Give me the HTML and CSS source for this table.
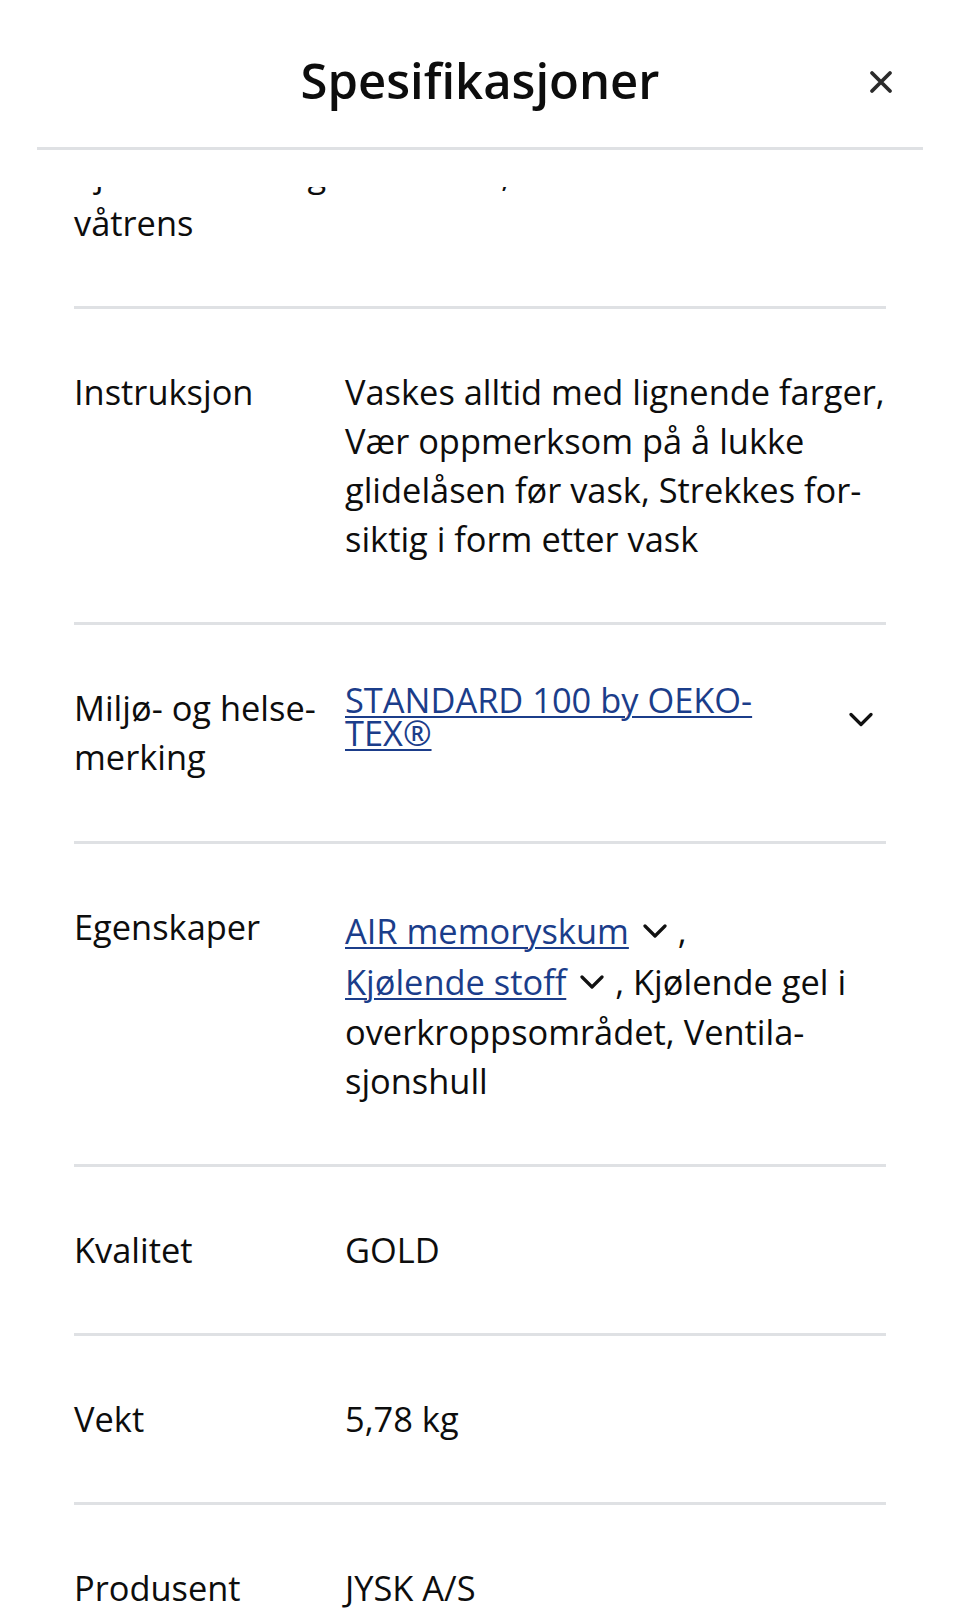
FILE: index.html
```html
<!DOCTYPE html>
<html lang="no">
<head>
<meta charset="utf-8">
<title>Spesifikasjoner</title>
<link rel="stylesheet" href="styles.css">
</head>
<body>
<div class="sheet">
  <header class="sheet-head">
    <h1 class="sheet-title">Spesifikasjoner</h1>
    <button class="close" type="button" aria-label="Lukk">
      <svg width="24" height="24" viewBox="0 0 24 24" aria-hidden="true"><path d="M3 3L21 21M21 3L3 21" fill="none" stroke="#2b2b2b" stroke-width="3.8" stroke-linecap="round"/></svg>
    </button>
  </header>
  <div class="sheet-body">
    <dl class="specs">
      <div class="spec-row">
        <dt>Kjemisk rens og våtrens</dt>
        <dd>Ikke tillatt, må ikke renses</dd>
      </div>
      <div class="spec-row">
        <dt>Instruksjon</dt>
        <dd>Vaskes alltid med lignende farger, Vær oppmerksom på å lukke glidelåsen før vask, Strekkes for&shy;siktig i form etter vask</dd>
      </div>
      <div class="spec-row">
        <dt>Miljø- og helse&shy;merking</dt>
        <dd class="dd-link">
          <a class="link link-block" href="#">STANDARD 100 by OEKO-TEX®</a>
          <button class="expand" type="button" aria-label="Vis mer">
            <svg width="24" height="15" viewBox="0 0 24 15" aria-hidden="true"><path d="M2 2.5L12 12.5L22 2.5" fill="none" stroke="#111" stroke-width="3.2" stroke-linecap="round" stroke-linejoin="round"/></svg>
          </button>
        </dd>
      </div>
      <div class="spec-row">
        <dt>Egenskaper</dt>
        <dd class="dd-tags"><span class="tag"><a class="link" href="#">AIR memoryskum</a><svg class="chev" width="24" height="14" viewBox="0 0 24 14" aria-hidden="true"><path d="M2 2L12 12L22 2" fill="none" stroke="#111" stroke-width="3.2" stroke-linecap="round" stroke-linejoin="round"/></svg> ,</span> <span class="tag"><a class="link" href="#">Kjølende stoff</a><svg class="chev" width="24" height="14" viewBox="0 0 24 14" aria-hidden="true"><path d="M2 2L12 12L22 2" fill="none" stroke="#111" stroke-width="3.2" stroke-linecap="round" stroke-linejoin="round"/></svg> ,</span> Kjølende gel i overkroppsområdet, Ventila&shy;sjonshull</dd>
      </div>
      <div class="spec-row">
        <dt>Kvalitet</dt>
        <dd>GOLD</dd>
      </div>
      <div class="spec-row">
        <dt>Vekt</dt>
        <dd>5,78 kg</dd>
      </div>
      <div class="spec-row">
        <dt>Produsent</dt>
        <dd>JYSK A/S</dd>
      </div>
    </dl>
  </div>
</div>
</body>
</html>
```

FILE: styles.css
```css
html, body {
  margin: 0;
  padding: 0;
  height: 1615px;
  overflow: hidden;
  background: #ffffff;
}

body {
  font-family: "Open Sans", "Noto Sans", "Liberation Sans", sans-serif;
  color: #0d0d0d;
}

.sheet {
  height: 1615px;
  display: flex;
  flex-direction: column;
}

.sheet-head {
  margin: 0 37px;
  padding: 50px 0 37px;
  border-bottom: 3px solid #dfe1e4;
  display: grid;
  grid-template-columns: 1fr auto 1fr;
  align-items: center;
}

.sheet-title {
  grid-column: 2;
  margin: 0;
  font-size: 49px;
  font-weight: 600;
  line-height: 60px;
  color: #0d0d0d;
}

.close {
  grid-column: 3;
  justify-self: end;
  margin-right: 18px;
  margin-top: 4px;
  width: 48px;
  height: 48px;
  padding: 0;
  border: 0;
  background: transparent;
  display: flex;
  align-items: center;
  justify-content: center;
}

.sheet-body {
  flex: 1;
  overflow: hidden;
  margin-top: 37px;
  padding: 0 74px;
}

.specs {
  margin: -96px 0 0;
  padding: 0;
}

.spec-row {
  display: grid;
  grid-template-columns: 255px 1fr;
  column-gap: 16px;
  align-items: start;
  padding: 58px 0 59px;
  border-bottom: 3px solid #dfe1e4;
}

.spec-row dt,
.spec-row dd {
  margin: 0;
  font-size: 34.4px;
  line-height: 49px;
}

.dd-link {
  display: flex;
  align-items: flex-start;
  gap: 16px;
  min-height: 99px;
}

.link {
  color: #1b3d8a;
  text-decoration: underline;
  text-decoration-thickness: 2px;
  text-underline-offset: 3px;
}

.link-block {
  flex: 1;
  line-height: 33px;
}

.expand {
  flex: none;
  width: 50px;
  height: 50px;
  margin-top: 11px;
  padding: 0;
  border: 0;
  background: transparent;
  display: flex;
  align-items: center;
  justify-content: center;
}

.dd-tags {
  padding-top: 3px;
}

.tag {
  display: inline-block;
  white-space: nowrap;
  line-height: 51px;
}

.chev {
  margin-left: 14px;
  margin-right: 2px;
  vertical-align: 6px;
}
```
